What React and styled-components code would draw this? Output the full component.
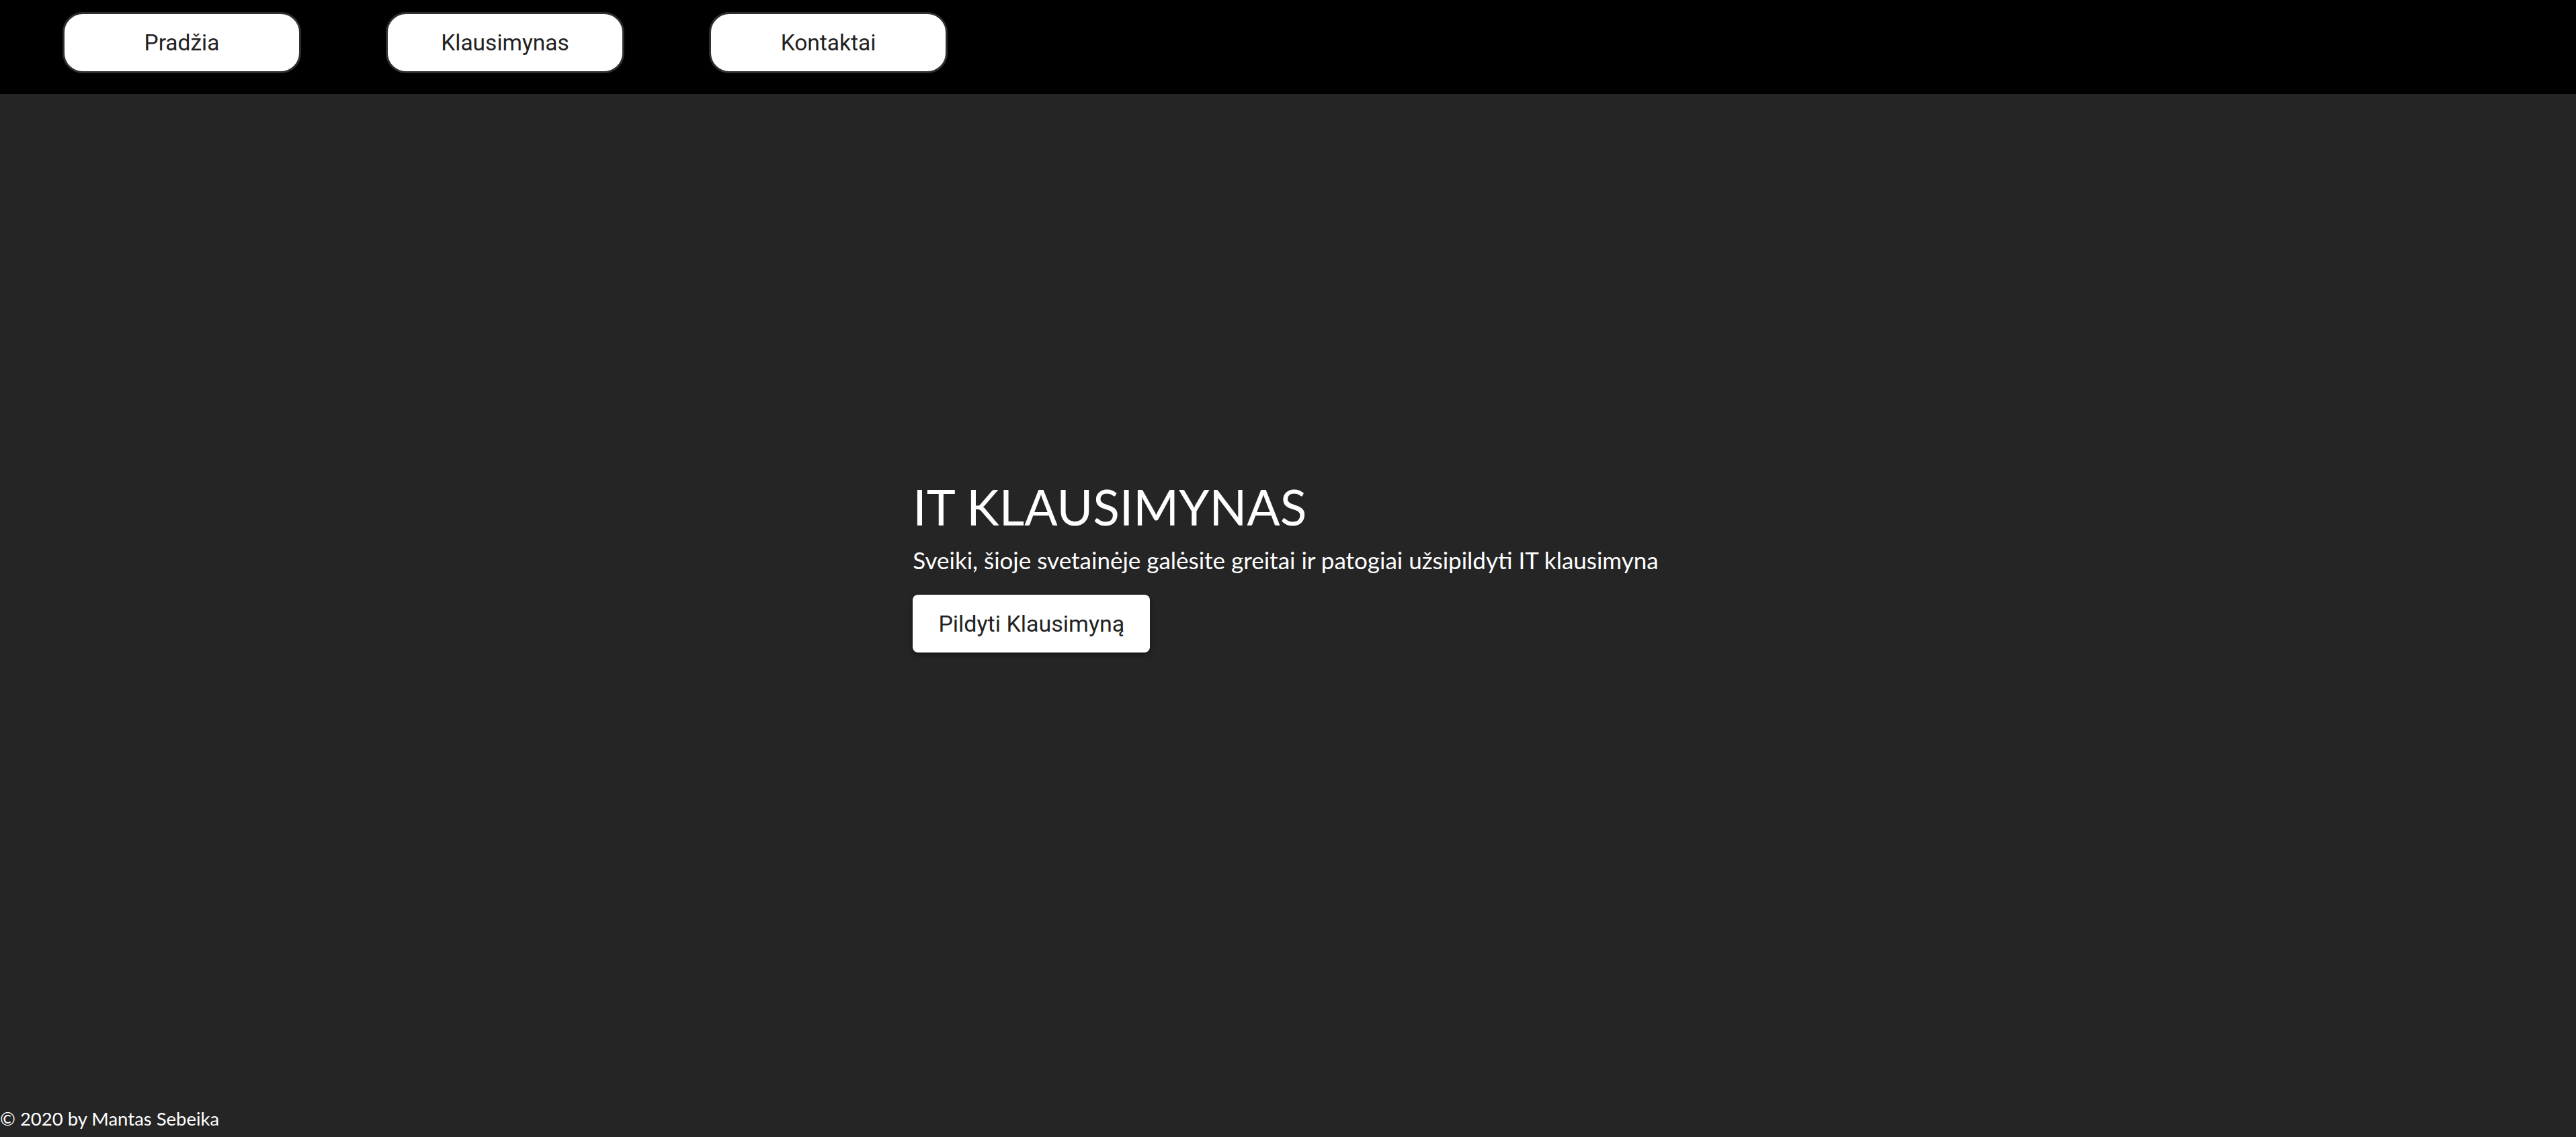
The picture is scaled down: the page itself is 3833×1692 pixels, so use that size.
import styled, { createGlobalStyle } from "styled-components";

const GlobalStyle = createGlobalStyle`
  html, body {
    margin: 0;
    padding: 0;
    background-color: #252525;
  }

  * {
    box-sizing: border-box;
  }
`;

const Page = styled.div`
  min-height: 100vh;
  display: flex;
  flex-direction: column;
  background-color: #252525;
`;

const NavBar = styled.nav`
  height: 140px;
  background-color: #000;
  display: flex;
  align-items: flex-start;
  gap: 126px;
  padding: 18px 0 0 93px;
`;

const NavButton = styled.a`
  width: 355px;
  height: 91px;
  display: flex;
  align-items: center;
  justify-content: center;
  background-color: #fff;
  border: 3px solid #2e2e2e;
  border-radius: 30px;
  color: #222;
  font-family: Roboto, "Liberation Sans", sans-serif;
  font-size: 33.5px;
  text-decoration: none;
  cursor: pointer;
`;

const Main = styled.main`
  flex: 1;
  display: flex;
  align-items: center;
  justify-content: center;
  padding: 0 7px 101px 0;
`;

const Hero = styled.section`
  display: flex;
  flex-direction: column;
  align-items: flex-start;
`;

const Title = styled.h1`
  margin: 0;
  color: #fff;
  font-family: Lato, "Open Sans", sans-serif;
  font-weight: 400;
  font-size: 73px;
  line-height: 1.2;
`;

const Subtitle = styled.p`
  margin: 14px 0 0;
  color: #fff;
  font-family: Lato, "Open Sans", sans-serif;
  font-size: 35px;
  line-height: 1.2;
`;

const CtaButton = styled.button`
  margin-top: 31px;
  width: 353px;
  height: 86px;
  border: none;
  border-radius: 8px;
  background-color: #fff;
  color: #222;
  font-family: Roboto, "Liberation Sans", sans-serif;
  font-size: 34px;
  box-shadow: 0 3px 8px rgba(0, 0, 0, 0.45);
  cursor: pointer;
`;

const Footer = styled.footer`
  height: 49px;
  padding-bottom: 5px;
  color: #fff;
  font-family: Lato, "Open Sans", sans-serif;
  font-size: 27.5px;
  line-height: 44px;
  white-space: nowrap;
`;

const links = ["Pradžia", "Klausimynas", "Kontaktai"];

export default function App() {
  return (
    <>
      <GlobalStyle />
      <Page>
        <NavBar>
          {links.map((label) => (
            <NavButton key={label}>{label}</NavButton>
          ))}
        </NavBar>

        <Main>
          <Hero>
            <Title>IT KLAUSIMYNAS</Title>
            <Subtitle>
              Sveiki, šioje svetainėje galėsite greitai ir patogiai
              užsipildyti IT klausimyna
            </Subtitle>
            <CtaButton>Pildyti Klausimyną</CtaButton>
          </Hero>
        </Main>

        <Footer>© 2020 by Mantas Sebeika</Footer>
      </Page>
    </>
  );
}
